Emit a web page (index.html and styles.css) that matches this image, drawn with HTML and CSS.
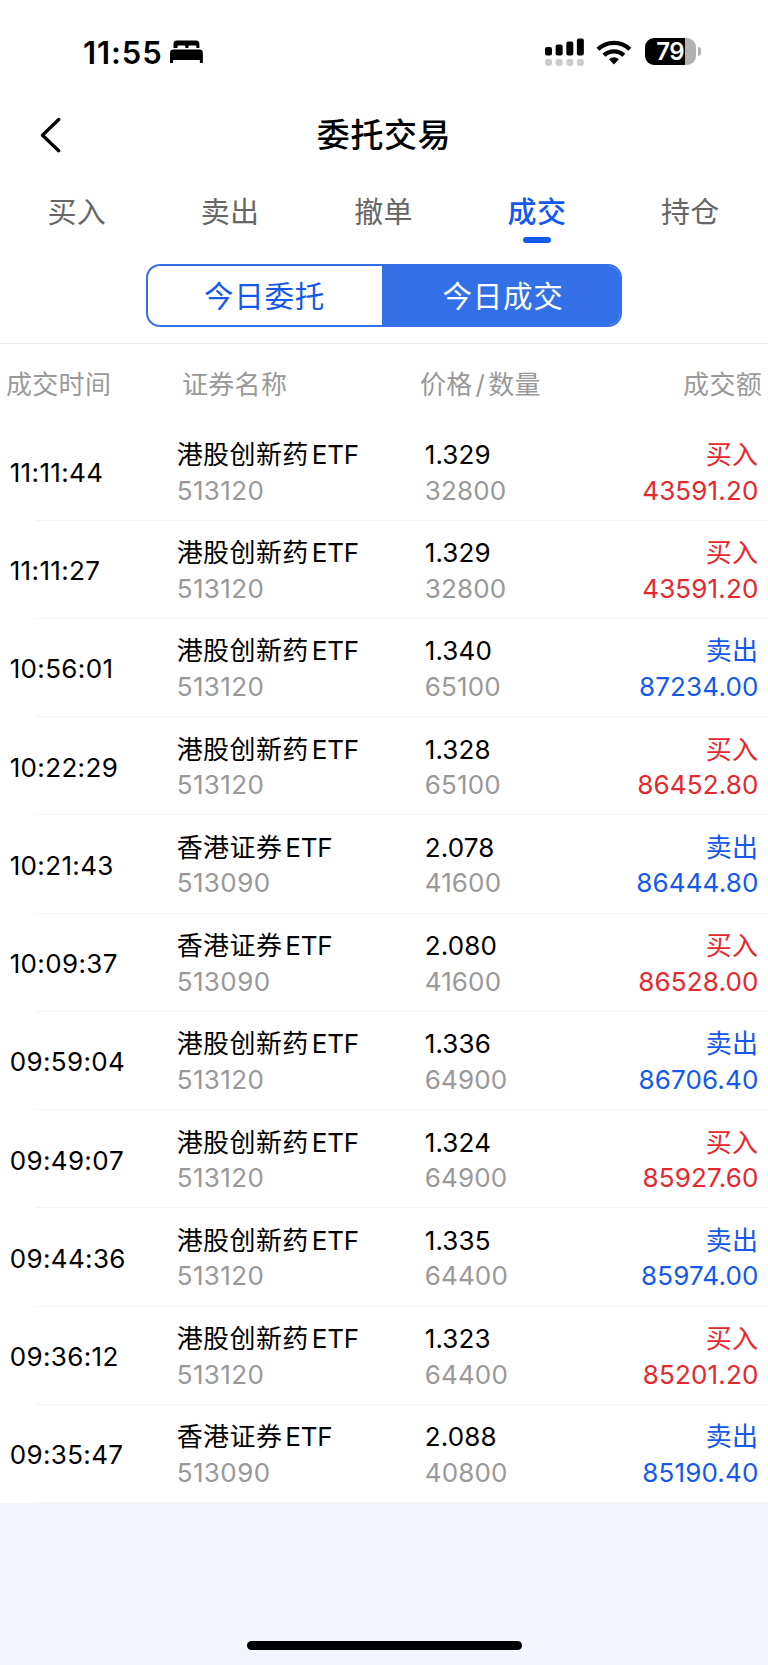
FILE: index.html
```
<!DOCTYPE html>
<html lang="zh-CN">

<head>
  <meta charset="UTF-8">
  <meta name="viewport" content="width=device-width, initial-scale=1.0">
  <title>委托交易</title>
  <link rel="stylesheet" href="styles.css">
</head>

<body>
  <div class="status-bar">
    <span class="clock">11:55</span>
    <svg class="bed" width="33" height="23" viewBox="0 0 33 23">
      <path d="M3.5 8V4q0-3.500 3.500-3.500h19q3.500 0 3.500 3.500v4h-3V6.500q0-1-1-1h-6q-1 0-1 1V8h-3V6.500q0-1-1-1h-6q-1 0-1 1V8z" />
      <path d="M0 23V13q0-3.500 3.500-3.500h26q3.500 0 3.500 3.500v10h-3v-3H3v3z" />
    </svg>
    <svg class="signal" width="40" height="28" viewBox="0 0 40 28">
      <rect x="0" y="9" width="7" height="8.500" rx="2" />
      <rect x="10.700" y="6.500" width="7" height="11" rx="2" />
      <rect x="21.400" y="3.500" width="7" height="14" rx="2" />
      <rect x="32" y="0.500" width="7" height="17" rx="2" />
      <g fill="#cbcbcb">
        <rect x="0" y="21" width="7" height="7" rx="2.500" />
        <rect x="10.700" y="21" width="7" height="7" rx="2.500" />
        <rect x="21.400" y="21" width="7" height="7" rx="2.500" />
        <rect x="32" y="21" width="7" height="7" rx="2.500" />
      </g>
    </svg>
    <svg class="wifi" width="36" height="26" viewBox="0 0 36 26">
      <g fill="none" stroke="#000" stroke-width="4.200">
        <path d="M2 10.300a23 23 0 0 1 32 0" />
        <path d="M8 16.300a14.500 14.500 0 0 1 20 0" />
      </g>
      <path d="M18 25.500l-5-5.200q5-4.200 10 0z" />
    </svg>
    <div class="battery"><span class="battery-level">79</span></div>
    <span class="battery-tip"></span>
  </div>

  <div class="title-bar">
    <svg class="back" width="22" height="36" viewBox="0 0 22 36">
      <path d="M18.700 2.500L2.500 18.200l16.200 15.500" fill="none" stroke="#000" stroke-width="3.300" stroke-linecap="round" stroke-linejoin="round" />
    </svg>
    <h1>委托交易</h1>
  </div>

  <div class="tabs">
    <div class="tab">买入</div>
    <div class="tab">卖出</div>
    <div class="tab">撤单</div>
    <div class="tab active">成交</div>
    <div class="tab">持仓</div>
  </div>

  <div class="switch">
    <div class="option">今日委托</div>
    <div class="option selected">今日成交</div>
  </div>

  <div class="list-head">
    <span>成交时间</span>
    <span>证券名称</span>
    <span>价格<i class="slash">/</i>数量</span>
    <span class="right">成交额</span>
  </div>

  <ul class="deals">
    <li class="deal buy">
      <span class="time">11:11:44</span>
      <div class="cell"><p>港股创新药<span class="latin">ETF</span></p><p class="sub">513120</p></div>
      <div class="cell price"><p>1.329</p><p class="sub">32800</p></div>
      <div class="cell amount"><p>买入</p><p class="total">43591.20</p></div>
    </li>
    <li class="deal buy">
      <span class="time">11:11:27</span>
      <div class="cell"><p>港股创新药<span class="latin">ETF</span></p><p class="sub">513120</p></div>
      <div class="cell price"><p>1.329</p><p class="sub">32800</p></div>
      <div class="cell amount"><p>买入</p><p class="total">43591.20</p></div>
    </li>
    <li class="deal sell">
      <span class="time">10:56:01</span>
      <div class="cell"><p>港股创新药<span class="latin">ETF</span></p><p class="sub">513120</p></div>
      <div class="cell price"><p>1.340</p><p class="sub">65100</p></div>
      <div class="cell amount"><p>卖出</p><p class="total">87234.00</p></div>
    </li>
    <li class="deal buy">
      <span class="time">10:22:29</span>
      <div class="cell"><p>港股创新药<span class="latin">ETF</span></p><p class="sub">513120</p></div>
      <div class="cell price"><p>1.328</p><p class="sub">65100</p></div>
      <div class="cell amount"><p>买入</p><p class="total">86452.80</p></div>
    </li>
    <li class="deal sell">
      <span class="time">10:21:43</span>
      <div class="cell"><p>香港证券<span class="latin">ETF</span></p><p class="sub">513090</p></div>
      <div class="cell price"><p>2.078</p><p class="sub">41600</p></div>
      <div class="cell amount"><p>卖出</p><p class="total">86444.80</p></div>
    </li>
    <li class="deal buy">
      <span class="time">10:09:37</span>
      <div class="cell"><p>香港证券<span class="latin">ETF</span></p><p class="sub">513090</p></div>
      <div class="cell price"><p>2.080</p><p class="sub">41600</p></div>
      <div class="cell amount"><p>买入</p><p class="total">86528.00</p></div>
    </li>
    <li class="deal sell">
      <span class="time">09:59:04</span>
      <div class="cell"><p>港股创新药<span class="latin">ETF</span></p><p class="sub">513120</p></div>
      <div class="cell price"><p>1.336</p><p class="sub">64900</p></div>
      <div class="cell amount"><p>卖出</p><p class="total">86706.40</p></div>
    </li>
    <li class="deal buy">
      <span class="time">09:49:07</span>
      <div class="cell"><p>港股创新药<span class="latin">ETF</span></p><p class="sub">513120</p></div>
      <div class="cell price"><p>1.324</p><p class="sub">64900</p></div>
      <div class="cell amount"><p>买入</p><p class="total">85927.60</p></div>
    </li>
    <li class="deal sell">
      <span class="time">09:44:36</span>
      <div class="cell"><p>港股创新药<span class="latin">ETF</span></p><p class="sub">513120</p></div>
      <div class="cell price"><p>1.335</p><p class="sub">64400</p></div>
      <div class="cell amount"><p>卖出</p><p class="total">85974.00</p></div>
    </li>
    <li class="deal buy">
      <span class="time">09:36:12</span>
      <div class="cell"><p>港股创新药<span class="latin">ETF</span></p><p class="sub">513120</p></div>
      <div class="cell price"><p>1.323</p><p class="sub">64400</p></div>
      <div class="cell amount"><p>买入</p><p class="total">85201.20</p></div>
    </li>
    <li class="deal sell">
      <span class="time">09:35:47</span>
      <div class="cell"><p>香港证券<span class="latin">ETF</span></p><p class="sub">513090</p></div>
      <div class="cell price"><p>2.088</p><p class="sub">40800</p></div>
      <div class="cell amount"><p>卖出</p><p class="total">85190.40</p></div>
    </li>
  </ul>

  <div class="bottom">
    <div class="home-indicator"></div>
  </div>
</body>

</html>
```
FILE: styles.css
```
* {
  box-sizing: border-box;
}

body {
  margin: 0;
  height: 1665px;
  display: flex;
  flex-direction: column;
  background-color: white;
  color: black;
  font-family: Inter, "Noto Sans CJK SC", sans-serif;
  font-size: 26px;
}

/* status bar */
.status-bar {
  height: 90px;
  padding: 13px 67px 0 83px;
  display: flex;
  align-items: center;
}

.clock {
  width: 87px;
  padding-top: 1px;
  font-size: 31px;
  font-weight: 600;
  font-kerning: none;
  letter-spacing: 0.9px;
}

.signal {
  margin-left: 342px;
}

.wifi {
  margin-left: 12px;
}

.battery {
  margin-left: 13px;
  width: 51px;
  height: 27px;
  border-radius: 9px;
  background: linear-gradient(to right, black 79%, #b1b1b1 79%);
  color: white;
  display: flex;
  align-items: center;
  justify-content: center;
}

.battery-level {
  padding-right: 1px;
  font-size: 24px;
  font-weight: 600;
  letter-spacing: -0.7px;
}

.battery-tip {
  width: 3px;
  height: 9px;
  margin-left: 2px;
  border-radius: 0 4px 4px 0;
  background-color: #b1b1b1;
}

/* title */
.title-bar {
  height: 88px;
  padding: 0 40px;
  display: grid;
  grid-template-columns: 22px 1fr 22px;
  align-items: center;
}

.back {
  margin-top: 2px;
}

.title-bar h1 {
  margin: 0 0 2px;
  text-align: center;
  font-size: 33px;
  font-weight: 500;
  letter-spacing: 0.6px;
}

/* tabs */
.tabs {
  height: 86px;
  padding-right: 1px;
  display: grid;
  grid-template-columns: repeat(5, 1fr);
}

.tab {
  display: flex;
  flex-direction: column;
  align-items: center;
  padding-top: 13px;
  font-size: 29px;
  line-height: 44px;
  letter-spacing: 0.3px;
  color: #666;
}

.tab.active {
  color: #1459eb;
  font-weight: 500;
}

.tab.active::after {
  content: "";
  width: 28px;
  height: 6px;
  margin-top: 2px;
  border-radius: 3px;
  background-color: #1459eb;
}

/* today switch */
.switch {
  width: 476px;
  height: 63px;
  margin: 0 auto 16px;
  display: flex;
  flex-shrink: 0;
  border: 2px solid #3370e8;
  border-radius: 14px;
  overflow: hidden;
}

.option {
  width: 234px;
  padding-right: 1px;
  text-align: center;
  font-size: 29.5px;
  line-height: 60px;
  letter-spacing: 0.7px;
  color: #1459eb;
}

.option.selected {
  flex: 1;
  padding: 0 0 0 4px;
  background-color: #3370e8;
  color: white;
}

/* list */
.list-head,
.deal {
  display: grid;
  grid-template-columns: 167px 248px 1fr 170px;
}

.list-head {
  flex-shrink: 0;
  height: 79.5px;
  padding: 0 6px 2px;
  border-top: 1px solid #e9e9e9;
  grid-template-columns: 176px 238px 1fr 170px;
  align-items: center;
  color: #999;
  letter-spacing: 0.3px;
}

.slash {
  font-style: normal;
  margin: 0 3px;
}

.right {
  text-align: right;
}

.deals {
  list-style: none;
  margin: 0;
  padding: 0;
}

.deal {
  height: 98.24px;
  padding: 14.5px 9.5px 0 9.7px;
  background: linear-gradient(#f5f5f5, #f5f5f5) 36px 100% / 100% 1px no-repeat;
}

.time {
  line-height: 71px;
  font-kerning: none;
  letter-spacing: 0.35px;
}

.cell p {
  margin: 0;
  height: 35.5px;
  line-height: 36px;
  letter-spacing: 0.4px;
}

.latin {
  margin-left: 3px;
  letter-spacing: -0.2px;
}

.cell .sub {
  color: #999;
}

.cell.price p,
.cell .total {
  letter-spacing: 0.15px;
}

.amount {
  text-align: right;
}

.buy .amount {
  color: #e5282d;
}

.sell .amount {
  color: #1459eb;
}

.bottom {
  flex: 1;
  display: flex;
  align-items: flex-end;
  justify-content: center;
  padding-bottom: 15px;
  background-color: #f3f6fe;
}

.home-indicator {
  width: 275px;
  height: 9px;
  border-radius: 5px;
  background-color: black;
}
```
